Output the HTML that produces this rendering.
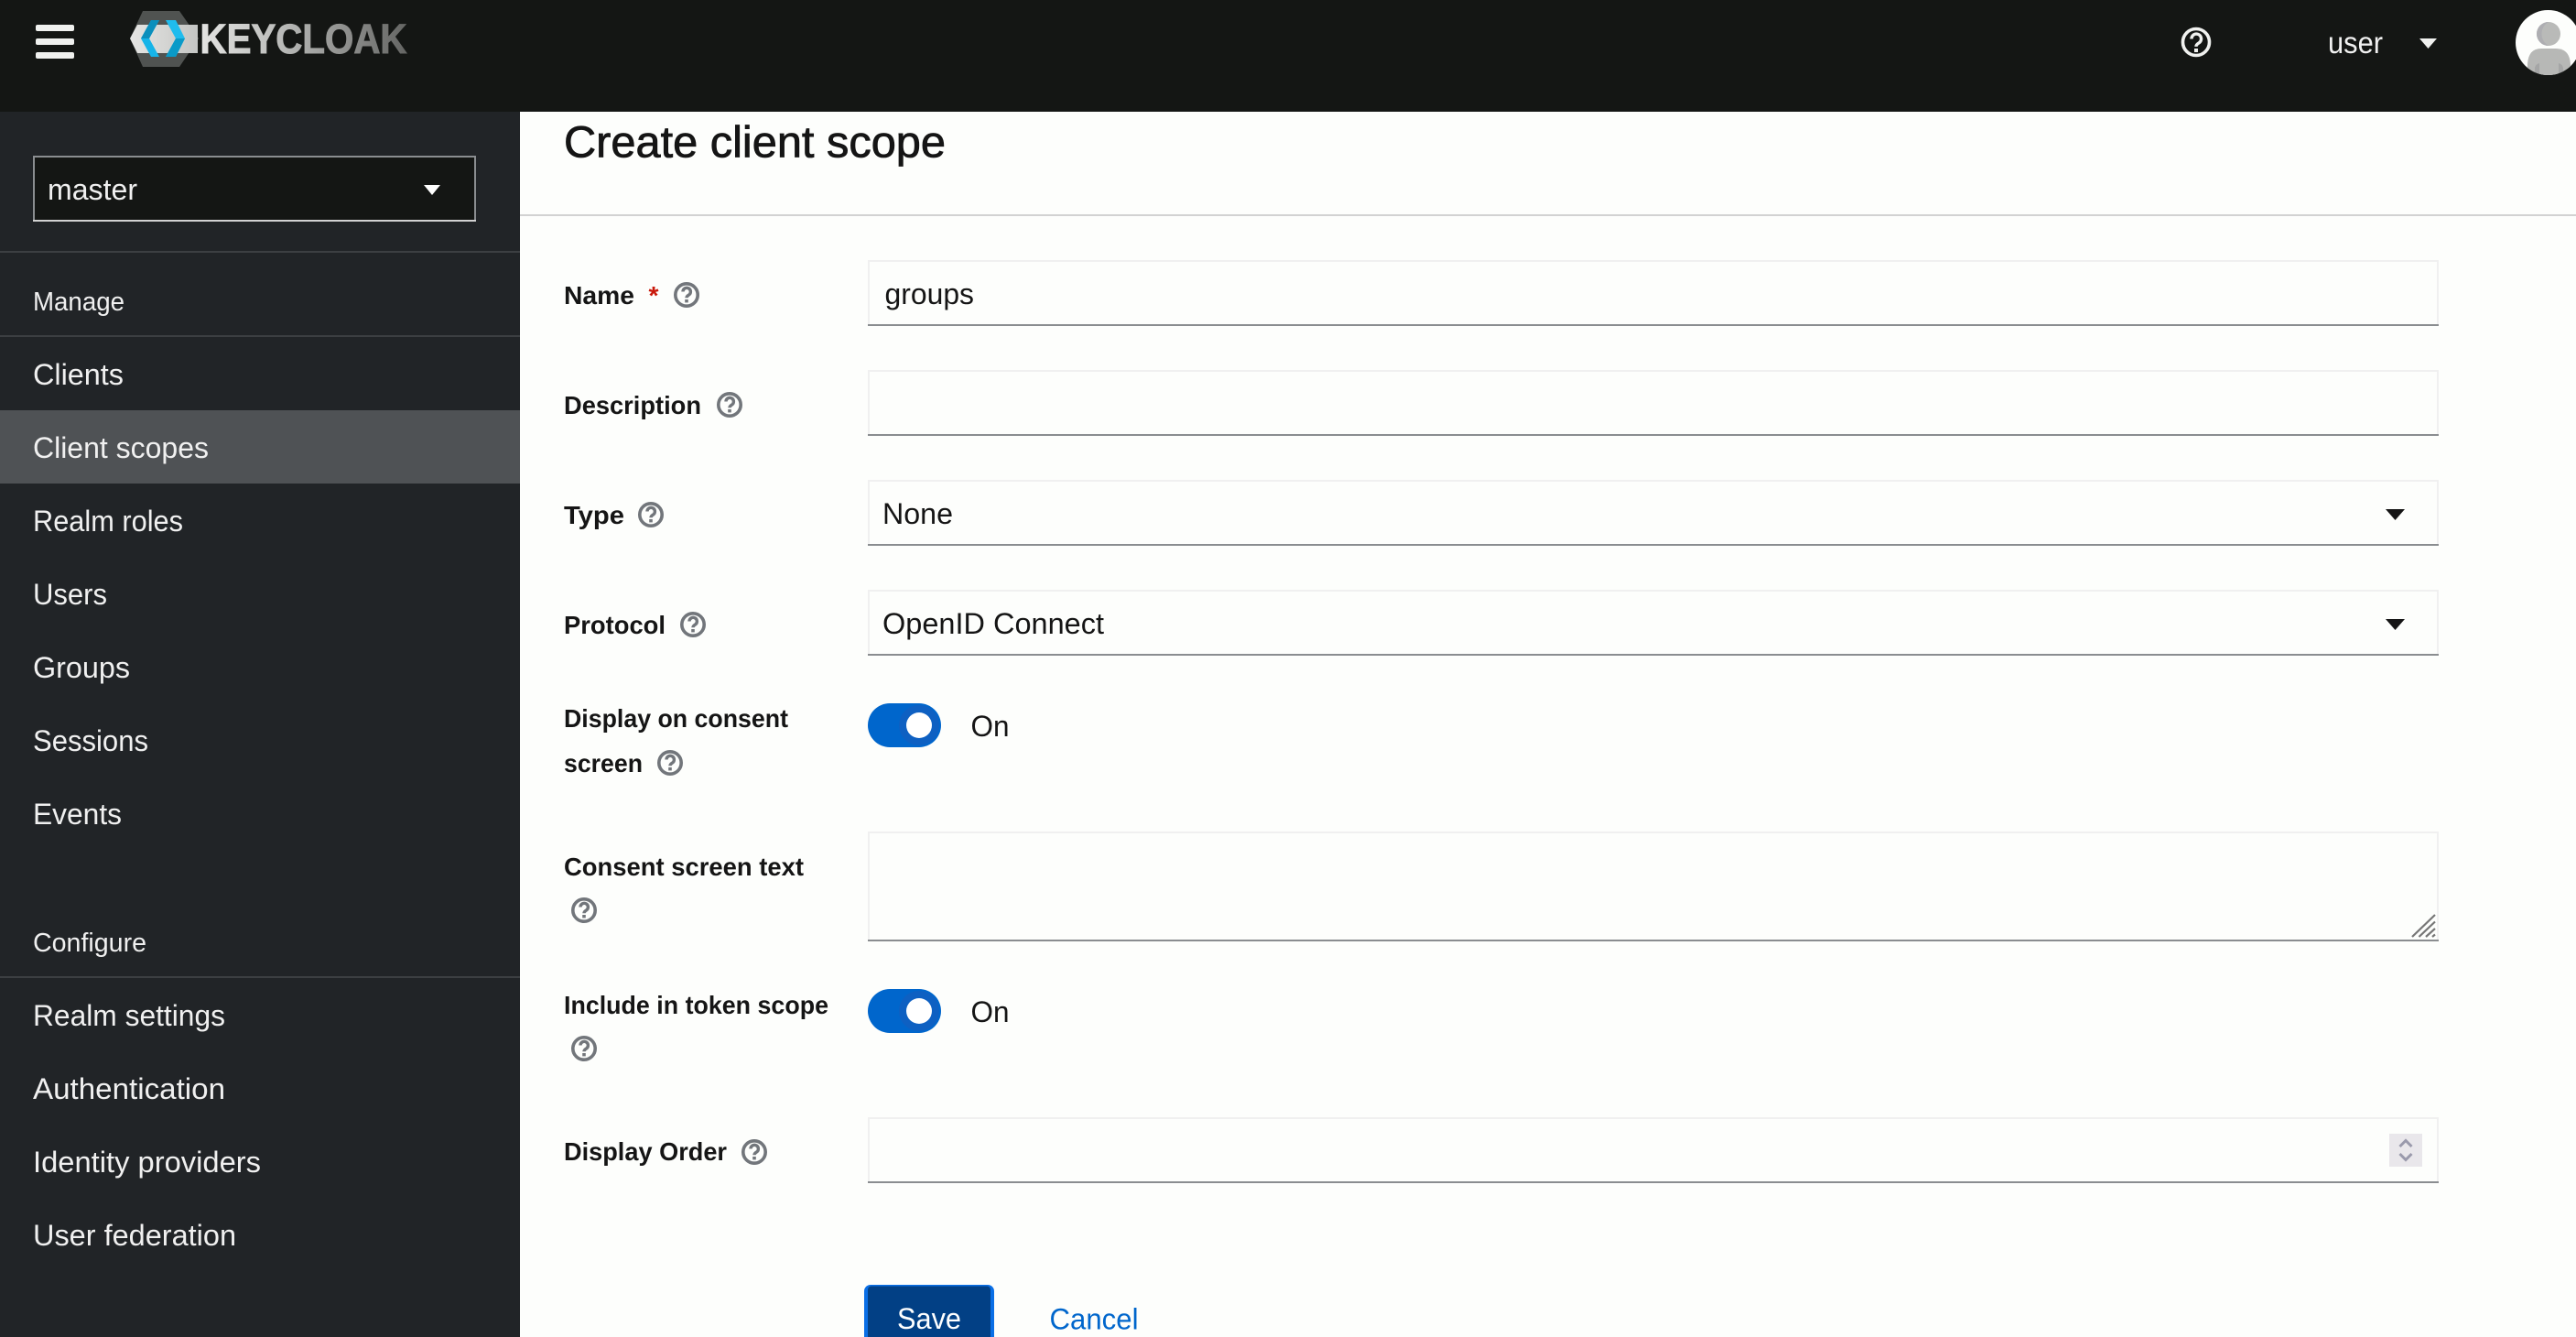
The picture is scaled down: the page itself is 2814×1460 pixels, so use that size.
<!DOCTYPE html>
<html lang="en">
<head>
<meta charset="utf-8">
<title>Create client scope - Keycloak</title>
<style>
html,body{margin:0;padding:0;width:2814px;height:1460px;overflow:hidden;background:#fdfefc}
svg{display:block}
text{font-family:"Liberation Sans",sans-serif;font-size:32px;fill:#151515}
.nav text,text.nav{fill:#f0f0f0}
.lb{font-weight:700;font-size:28px;fill:#151515}
.hp circle{fill:none;stroke:#72767b;stroke-width:3.6}
.hp path{fill:none;stroke:#72767b;stroke-width:3.4}
.hp rect{fill:#72767b}
</style>
</head>
<body>
<svg width="2814" height="1460" viewBox="0 0 2814 1460" xmlns="http://www.w3.org/2000/svg">
<defs>
<linearGradient id="kc" gradientUnits="userSpaceOnUse" x1="218" y1="0" x2="445" y2="0">
<stop offset="0" stop-color="#e4e4e2"/><stop offset=".35" stop-color="#bfc0be"/><stop offset=".7" stop-color="#8f908e"/><stop offset="1" stop-color="#646563"/>
</linearGradient>
<linearGradient id="band" gradientUnits="userSpaceOnUse" x1="142" y1="0" x2="216" y2="0">
<stop offset="0" stop-color="#e6e6e4"/><stop offset="1" stop-color="#c4c5c3"/>
</linearGradient>
<clipPath id="av"><circle cx="2783.5" cy="46.5" r="35.5"/></clipPath>
<clipPath id="sv"><rect x="944" y="1403" width="142" height="80" rx="7"/></clipPath>
</defs>

<!-- backgrounds -->
<rect width="2814" height="1460" fill="#fdfefc"/>
<rect width="2814" height="122" fill="#141614"/>
<rect y="122" width="568" height="1338" fill="#212427"/>

<!-- header -->
<g fill="#f0f1ef">
<rect x="39" y="27" width="42" height="7" rx="2"/>
<rect x="39" y="42" width="42" height="7" rx="2"/>
<rect x="39" y="57" width="42" height="7" rx="2"/>
</g>
<!-- logo -->
<polygon points="156,12 196,12 217,42 196,73 156,73 142,42" fill="#505351"/>
<polygon points="142,42 150,27 216,27 216,58 150,58" fill="url(#band)"/>
<polygon points="165,22 174,22 163,42 174,62 165,62 154,42" fill="#16b4e8"/>
<polygon points="165,22 174,22 163,42 158,42 154,42" fill="#0b8fbc"/>
<polygon points="181,22 192,22 202,42 192,62 181,62 192,42" fill="#1fbcee"/>
<polygon points="202,42 192,62 181,62 192,42" fill="#0a9ac8"/>
<text x="218.5" y="58" textLength="226" lengthAdjust="spacingAndGlyphs" style="font-size:45px;font-weight:700;fill:url(#kc);stroke:url(#kc);stroke-width:1">KEYCLOAK</text>

<g fill="none" stroke="#f0f1ef">
<circle cx="2399" cy="46" r="14.5" stroke-width="3.6"/>
<path d="M2394 42.5a5.3 5.3 0 1 1 8 4.4q-3 1.7-3 4" stroke-width="3.4"/>
</g>
<rect x="2397" y="53" width="4" height="4" fill="#f0f1ef"/>
<text x="2543" y="58" textLength="60" lengthAdjust="spacingAndGlyphs" style="fill:#f0f0f0;font-size:33px">user</text>
<polygon points="2643,42 2662,42 2652.5,53" fill="#f0f1ef"/>
<circle cx="2783.5" cy="46.5" r="35.5" fill="#fdfefc"/>
<g clip-path="url(#av)">
<circle cx="2784" cy="37" r="13" fill="#b9bab8"/>
<path d="M2784 24a13 13 0 0 0 0 26a15 15 0 0 1 0-26z" fill="#aeaeb2"/>
<path d="M2761 90V70q1-17 15-17h16q15 0 16 17v20z" fill="#b7b8b6"/>
<path d="M2769 90V74q1-4 5-5v21zM2800 90V74q-1-4-5-5v21z" fill="#a5a6a6"/>
</g>

<!-- realm select -->
<rect x="37" y="171" width="482" height="70" fill="#141614"/>
<path d="M37 241V171H519V241" fill="none" stroke="#8a8d90" stroke-width="2"/>
<path d="M36 241H520" stroke="#d2d2d2" stroke-width="2"/>
<text class="nav" x="52" y="218" textLength="98" lengthAdjust="spacingAndGlyphs">master</text>
<polygon points="463,202 481,202 472,213" fill="#fff"/>
<rect y="274" width="568" height="2" fill="#3c3f42"/>

<!-- nav -->
<rect y="448" width="568" height="80" fill="#4f5255"/>
<g class="nav">
<text x="36" y="339" textLength="100" lengthAdjust="spacingAndGlyphs" style="font-size:29px">Manage</text>
<text x="36" y="420" textLength="99" lengthAdjust="spacingAndGlyphs">Clients</text>
<text x="36" y="500" textLength="192" lengthAdjust="spacingAndGlyphs">Client scopes</text>
<text x="36" y="580" textLength="164" lengthAdjust="spacingAndGlyphs">Realm roles</text>
<text x="36" y="660" textLength="81" lengthAdjust="spacingAndGlyphs">Users</text>
<text x="36" y="740" textLength="106" lengthAdjust="spacingAndGlyphs">Groups</text>
<text x="36" y="820" textLength="126" lengthAdjust="spacingAndGlyphs">Sessions</text>
<text x="36" y="900" textLength="97" lengthAdjust="spacingAndGlyphs">Events</text>
<text x="36" y="1039" textLength="124" lengthAdjust="spacingAndGlyphs" style="font-size:29px">Configure</text>
<text x="36" y="1120" textLength="210" lengthAdjust="spacingAndGlyphs">Realm settings</text>
<text x="36" y="1200" textLength="210" lengthAdjust="spacingAndGlyphs">Authentication</text>
<text x="36" y="1280" textLength="249" lengthAdjust="spacingAndGlyphs">Identity providers</text>
<text x="36" y="1360" textLength="222" lengthAdjust="spacingAndGlyphs">User federation</text>
</g>
<rect y="366" width="568" height="2" fill="#3c3f42"/>
<rect y="1066" width="568" height="2" fill="#3c3f42"/>

<!-- title -->
<text x="616" y="171.5" textLength="417" lengthAdjust="spacingAndGlyphs" style="font-size:48px;stroke:#151515;stroke-width:.8">Create client scope</text>
<rect x="568" y="234" width="2246" height="2" fill="#d2d2d2"/>

<!-- fields -->
<g fill="none" stroke="#f0f0f0" stroke-width="2">
<path d="M949 354V285H2663V354"/>
<path d="M949 474V405H2663V474"/>
<path d="M949 594V525H2663V594"/>
<path d="M949 714V645H2663V714"/>
<path d="M949 1026V909H2663V1026"/>
<path d="M949 1290V1221H2663V1290"/>
</g>
<g fill="#8a8d90">
<rect x="948" y="354" width="1716" height="2"/>
<rect x="948" y="474" width="1716" height="2"/>
<rect x="948" y="594" width="1716" height="2"/>
<rect x="948" y="714" width="1716" height="2"/>
<rect x="948" y="1026" width="1716" height="2"/>
<rect x="948" y="1290" width="1716" height="2"/>
</g>

<!-- labels -->
<text class="lb" x="616" y="332" textLength="77" lengthAdjust="spacingAndGlyphs">Name</text>
<text x="708.5" y="332" textLength="11" lengthAdjust="spacingAndGlyphs" style="font-size:28px;font-weight:700;fill:#c9190b">*</text>
<text class="lb" x="616" y="452" textLength="150" lengthAdjust="spacingAndGlyphs">Description</text>
<text class="lb" x="616" y="572" textLength="66" lengthAdjust="spacingAndGlyphs">Type</text>
<text class="lb" x="616" y="692" textLength="111" lengthAdjust="spacingAndGlyphs">Protocol</text>
<text class="lb" x="616" y="794" textLength="245" lengthAdjust="spacingAndGlyphs">Display on consent</text>
<text class="lb" x="616" y="843" textLength="86" lengthAdjust="spacingAndGlyphs">screen</text>
<text class="lb" x="616" y="956" textLength="262" lengthAdjust="spacingAndGlyphs">Consent screen text</text>
<text class="lb" x="616" y="1107" textLength="289" lengthAdjust="spacingAndGlyphs">Include in token scope</text>
<text class="lb" x="616" y="1267" textLength="178" lengthAdjust="spacingAndGlyphs">Display Order</text>

<!-- help icons -->
<g class="hp" transform="translate(750,322)"><circle r="12.2"/><path d="M-4 -3.5a4.2 4.2 0 1 1 6.4 3.6q-2.4 1.3-2.4 3.2"/><rect x="-1.8" y="5" width="3.6" height="3.4"/></g>
<g class="hp" transform="translate(797,442)"><circle r="12.2"/><path d="M-4 -3.5a4.2 4.2 0 1 1 6.4 3.6q-2.4 1.3-2.4 3.2"/><rect x="-1.8" y="5" width="3.6" height="3.4"/></g>
<g class="hp" transform="translate(711,562)"><circle r="12.2"/><path d="M-4 -3.5a4.2 4.2 0 1 1 6.4 3.6q-2.4 1.3-2.4 3.2"/><rect x="-1.8" y="5" width="3.6" height="3.4"/></g>
<g class="hp" transform="translate(757,682)"><circle r="12.2"/><path d="M-4 -3.5a4.2 4.2 0 1 1 6.4 3.6q-2.4 1.3-2.4 3.2"/><rect x="-1.8" y="5" width="3.6" height="3.4"/></g>
<g class="hp" transform="translate(732,833)"><circle r="12.2"/><path d="M-4 -3.5a4.2 4.2 0 1 1 6.4 3.6q-2.4 1.3-2.4 3.2"/><rect x="-1.8" y="5" width="3.6" height="3.4"/></g>
<g class="hp" transform="translate(638,994)"><circle r="12.2"/><path d="M-4 -3.5a4.2 4.2 0 1 1 6.4 3.6q-2.4 1.3-2.4 3.2"/><rect x="-1.8" y="5" width="3.6" height="3.4"/></g>
<g class="hp" transform="translate(638,1145)"><circle r="12.2"/><path d="M-4 -3.5a4.2 4.2 0 1 1 6.4 3.6q-2.4 1.3-2.4 3.2"/><rect x="-1.8" y="5" width="3.6" height="3.4"/></g>
<g class="hp" transform="translate(824,1258)"><circle r="12.2"/><path d="M-4 -3.5a4.2 4.2 0 1 1 6.4 3.6q-2.4 1.3-2.4 3.2"/><rect x="-1.8" y="5" width="3.6" height="3.4"/></g>

<!-- values -->
<text x="966.5" y="332" textLength="97.5" lengthAdjust="spacingAndGlyphs">groups</text>
<text x="964" y="572" textLength="77" lengthAdjust="spacingAndGlyphs">None</text>
<polygon points="2606,556 2627,556 2616.5,568" fill="#151515"/>
<text x="964" y="692" textLength="242" lengthAdjust="spacingAndGlyphs">OpenID Connect</text>
<polygon points="2606,676 2627,676 2616.5,688" fill="#151515"/>

<!-- toggles -->
<rect x="948" y="768" width="80" height="48" rx="24" fill="#0066cc"/>
<circle cx="1004" cy="792" r="22" fill="#0e60c2"/>
<circle cx="1004" cy="792" r="14" fill="#fff"/>
<text x="1060.5" y="804" textLength="42" lengthAdjust="spacingAndGlyphs">On</text>

<rect x="948" y="1080" width="80" height="48" rx="24" fill="#0066cc"/>
<circle cx="1004" cy="1104" r="22" fill="#0e60c2"/>
<circle cx="1004" cy="1104" r="14" fill="#fff"/>
<text x="1060.5" y="1116" textLength="42" lengthAdjust="spacingAndGlyphs">On</text>

<!-- textarea resizer -->
<g stroke="#767676" stroke-width="2.2" fill="none">
<path d="M2635 1023L2660 999M2642.5 1023L2660 1006.5M2650 1023L2660 1014M2657 1023L2660 1020.5"/>
</g>

<!-- number spinner -->
<rect x="2610" y="1238" width="36" height="36" fill="#e9e7eb"/>
<path d="M2621.5 1252L2628 1245.5L2634.5 1252M2621.5 1260L2628 1266.5L2634.5 1260" fill="none" stroke="#9a9aac" stroke-width="3"/>

<!-- actions -->
<g clip-path="url(#sv)">
<rect x="944" y="1403" width="142" height="80" fill="#0a6fe6"/>
<rect x="948" y="1404.5" width="134" height="70" rx="4" fill="#024085"/>
</g>
<text x="980" y="1451" textLength="70" lengthAdjust="spacingAndGlyphs" style="fill:#fff">Save</text>
<text x="1146.5" y="1451.5" textLength="97" lengthAdjust="spacingAndGlyphs" style="fill:#0066cc">Cancel</text>
</svg>
</body>
</html>
